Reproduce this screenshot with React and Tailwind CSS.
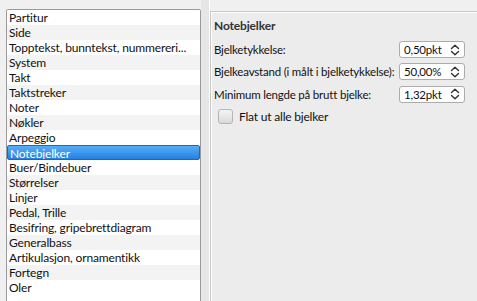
import React from "react";

const items = [
  "Partitur",
  "Side",
  "Topptekst, bunntekst, nummereri...",
  "System",
  "Takt",
  "Taktstreker",
  "Noter",
  "Nøkler",
  "Arpeggio",
  "Notebjelker",
  "Buer/Bindebuer",
  "Størrelser",
  "Linjer",
  "Pedal, Trille",
  "Besifring, gripebrettdiagram",
  "Generalbass",
  "Artikulasjon, ornamentikk",
  "Fortegn",
  "Oler",
];

const Arrows = () => (
  <svg width="10" height="12" viewBox="0 0 10 12" fill="none" stroke="#333" strokeWidth="1.4" strokeLinecap="round" strokeLinejoin="round">
    <path d="M1.5 4.5 L5 1.2 L8.5 4.5" />
    <path d="M1.5 7.5 L5 10.8 L8.5 7.5" />
  </svg>
);

const Spin = ({ value }) => (
  <div className="w-[66px] h-[17px] shrink-0 bg-white border border-[#acacac] rounded-[3px] flex items-center justify-between pl-[4px] pr-[4px] text-[11.5px] tracking-[-0.2px]">
    <span>{value}</span>
    <Arrows />
  </div>
);

export default function App() {
  return (
    <div
      className="w-[477px] h-[301px] bg-[#f0f0f0] flex overflow-hidden text-[12px] tracking-[-0.15px] text-[#111]"
      style={{ fontFamily: 'Lato, "Noto Sans", sans-serif' }}
    >
      <div className="pl-[6px] pt-[9px] w-[201px] shrink-0">
        <div className="bg-white border border-[#9a9a9a] rounded-t-[2px] h-[300px] overflow-hidden">
          {items.map((it, i) => (
            <div
              key={it}
              className={
                "h-[15px] leading-[15px] pl-[2px] whitespace-nowrap overflow-hidden " +
                (it === "Notebjelker"
                  ? "bg-gradient-to-b from-[#55adf8] to-[#2580e2] text-white border border-[#1a68c4] rounded-[2px] leading-[13px] pl-[1px]"
                  : i % 2 === 1
                  ? "bg-[#f3f3f3]"
                  : "bg-white")
              }
            >
              {it}
            </div>
          ))}
        </div>
      </div>
      <div className="w-[9px] shrink-0 flex">
        <div className="w-[8px] bg-[#e6e6e6]" />
        <div className="w-[1px] bg-white" />
      </div>
      <div className="flex-1 pt-[11px]">
        <div className="h-full border-t border-l border-[#c8c8c8] bg-[#ececec] shadow-[inset_1px_1px_0_#fff]">
          <div className="pl-[3px] pt-[5px] font-bold text-[12px] text-[#333]">Notebjelker</div>
          <div className="mt-[6px] pl-[3px] pr-[12px] flex flex-col gap-[5px] text-[11.5px] tracking-[-0.2px]">
            <div className="flex items-center justify-between gap-[2px]">
              <span className="whitespace-nowrap">Bjelketykkelse:</span>
              <Spin value="0,50pkt" />
            </div>
            <div className="flex items-center justify-between gap-[2px]">
              <span className="whitespace-nowrap">Bjelkeavstand (i målt i bjelketykkelse):</span>
              <Spin value="50,00%" />
            </div>
            <div className="flex items-center justify-between gap-[2px]">
              <span className="whitespace-nowrap">Minimum lengde på brutt bjelke:</span>
              <Spin value="1,32pkt" />
            </div>
            <div className="flex items-center gap-[6px] pl-[4px] text-[12px]">
              <div className="w-[15px] h-[15px] rounded-[3px] border border-[#b5b5b5] bg-gradient-to-b from-[#f4f4f4] to-[#dadada]" />
              <span>Flat ut alle bjelker</span>
            </div>
          </div>
        </div>
      </div>
    </div>
  );
}
